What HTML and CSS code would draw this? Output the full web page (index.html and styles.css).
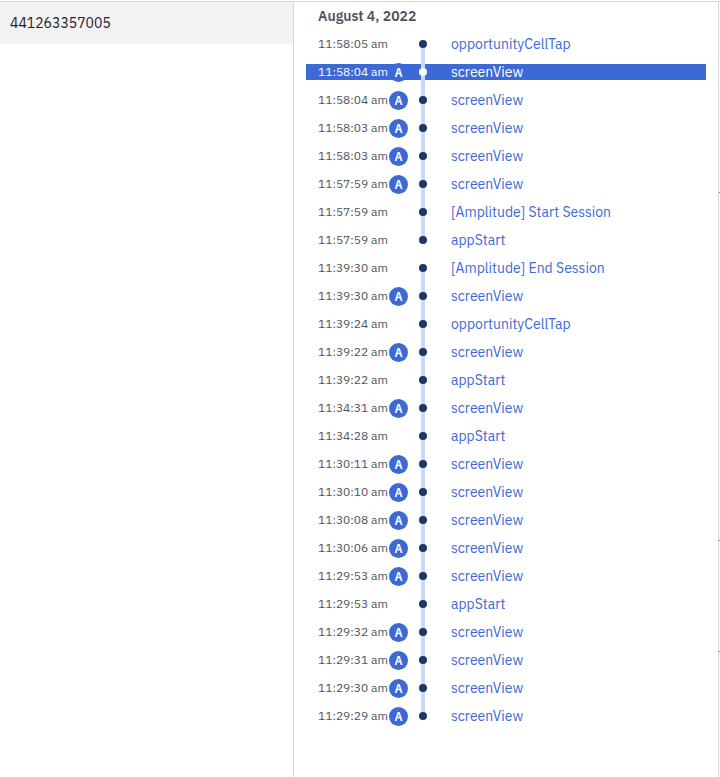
FILE: index.html
```html
<!DOCTYPE html>
<html lang="en">
<head>
<meta charset="utf-8">
<meta name="viewport" content="width=device-width, initial-scale=1">
<title>User activity</title>
<link rel="stylesheet" href="styles.css">
</head>
<body>
<div class="activity">
  <aside class="users">
    <div class="user-id">441263357005</div>
  </aside>
  <main class="stream">
    <h2 class="day">August 4, 2022</h2>
    <ol class="session">
      <li class="event"><time>11:58:05 am</time><i class="dot"></i><a href="#">opportunityCellTap</a></li>
      <li class="event selected"><time>11:58:04 am</time><span class="badge">A</span><i class="dot"></i><a href="#">screenView</a></li>
      <li class="event"><time>11:58:04 am</time><span class="badge">A</span><i class="dot"></i><a href="#">screenView</a></li>
      <li class="event"><time>11:58:03 am</time><span class="badge">A</span><i class="dot"></i><a href="#">screenView</a></li>
      <li class="event"><time>11:58:03 am</time><span class="badge">A</span><i class="dot"></i><a href="#">screenView</a></li>
      <li class="event"><time>11:57:59 am</time><span class="badge">A</span><i class="dot"></i><a href="#">screenView</a></li>
      <li class="event"><time>11:57:59 am</time><i class="dot"></i><a href="#">[Amplitude] Start Session</a></li>
      <li class="event"><time>11:57:59 am</time><i class="dot"></i><a href="#">appStart</a></li>
    </ol>
    <ol class="session">
      <li class="event"><time>11:39:30 am</time><i class="dot"></i><a href="#">[Amplitude] End Session</a></li>
      <li class="event"><time>11:39:30 am</time><span class="badge">A</span><i class="dot"></i><a href="#">screenView</a></li>
      <li class="event"><time>11:39:24 am</time><i class="dot"></i><a href="#">opportunityCellTap</a></li>
      <li class="event"><time>11:39:22 am</time><span class="badge">A</span><i class="dot"></i><a href="#">screenView</a></li>
      <li class="event"><time>11:39:22 am</time><i class="dot"></i><a href="#">appStart</a></li>
      <li class="event"><time>11:34:31 am</time><span class="badge">A</span><i class="dot"></i><a href="#">screenView</a></li>
      <li class="event"><time>11:34:28 am</time><i class="dot"></i><a href="#">appStart</a></li>
      <li class="event"><time>11:30:11 am</time><span class="badge">A</span><i class="dot"></i><a href="#">screenView</a></li>
      <li class="event"><time>11:30:10 am</time><span class="badge">A</span><i class="dot"></i><a href="#">screenView</a></li>
      <li class="event"><time>11:30:08 am</time><span class="badge">A</span><i class="dot"></i><a href="#">screenView</a></li>
      <li class="event"><time>11:30:06 am</time><span class="badge">A</span><i class="dot"></i><a href="#">screenView</a></li>
      <li class="event"><time>11:29:53 am</time><span class="badge">A</span><i class="dot"></i><a href="#">screenView</a></li>
      <li class="event"><time>11:29:53 am</time><i class="dot"></i><a href="#">appStart</a></li>
      <li class="event"><time>11:29:32 am</time><span class="badge">A</span><i class="dot"></i><a href="#">screenView</a></li>
      <li class="event"><time>11:29:31 am</time><span class="badge">A</span><i class="dot"></i><a href="#">screenView</a></li>
      <li class="event"><time>11:29:30 am</time><span class="badge">A</span><i class="dot"></i><a href="#">screenView</a></li>
      <li class="event"><time>11:29:29 am</time><span class="badge">A</span><i class="dot"></i><a href="#">screenView</a></li>
    </ol>
  </main>
  <div class="edge"><i class="tick first"></i><i class="tick second"></i><i class="tick third"></i></div>
</div>
</body>
</html>
```
FILE: styles.css
```css
:root {
  --blue: #3c69d6;
  --navy: #213669;
  --track: #c8d9fa;
  --rule: #d5d6da;
}

* { box-sizing: border-box; }

body {
  margin: 0;
  background: #fff;
  font-family: "IBM Plex Sans", Roboto, "Liberation Sans", sans-serif;
  color: #1e2024;
}

.activity {
  display: grid;
  grid-template-columns: 293px 1fr 1px;
  min-height: calc(100vh - 1px);
  margin-top: 1px;
  border-top: 1px solid var(--rule);
}

.user-id {
  padding: 11px 10px;
  background: #f2f2f4;
  font-size: 14px;
  line-height: 20px;
}

.stream {
  padding: 4px 12px 12px;
  border: solid var(--rule);
  border-width: 0 1px;
}

.day {
  margin: 0 0 10px;
  padding-left: 12px;
  font-size: 14px;
  font-weight: 600;
  line-height: 20px;
  color: #50525c;
}

.session {
  position: relative;
  display: grid;
  gap: 12px;
  margin: 0 0 12px;
  padding: 0;
  list-style: none;
}

/* Track joining the dots of one session */
.session::before {
  content: "";
  position: absolute;
  top: 8px;
  bottom: 8px;
  left: 115px;
  width: 4px;
  background: var(--track);
}

.event {
  display: grid;
  grid-template-columns: 71px 19px 11px 8px 24px 1fr;
  align-items: center;
  height: 16px;
  padding-left: 12px;
  line-height: 16px;
  white-space: nowrap;
}

.event time {
  grid-area: 1 / 1;
  font-size: 12px;
  color: #50525c;
}

.badge {
  grid-area: 1 / 2;
  height: 19px;
  margin: -1px 0 -2px;
  border-radius: 50%;
  background: var(--blue);
  color: #fff;
  font-size: 12px;
  font-weight: 600;
  line-height: 19px;
  text-align: center;
}

.dot {
  grid-area: 1 / 4;
  position: relative;
  height: 8px;
  border-radius: 50%;
  background: var(--navy);
}

.event a {
  grid-area: 1 / 6;
  font-size: 14px;
  color: var(--blue);
  text-decoration: none;
}

.selected { background: var(--blue); }
.selected time,
.selected a { color: #fff; }
.selected .dot { background: #fff; }

.edge { position: relative; }

.tick {
  position: absolute;
  width: 1px;
  height: 1px;
  background: #80838c;
}

.first { top: 190px; }
.second { top: 538px; }
.third { top: 649px; }
```
